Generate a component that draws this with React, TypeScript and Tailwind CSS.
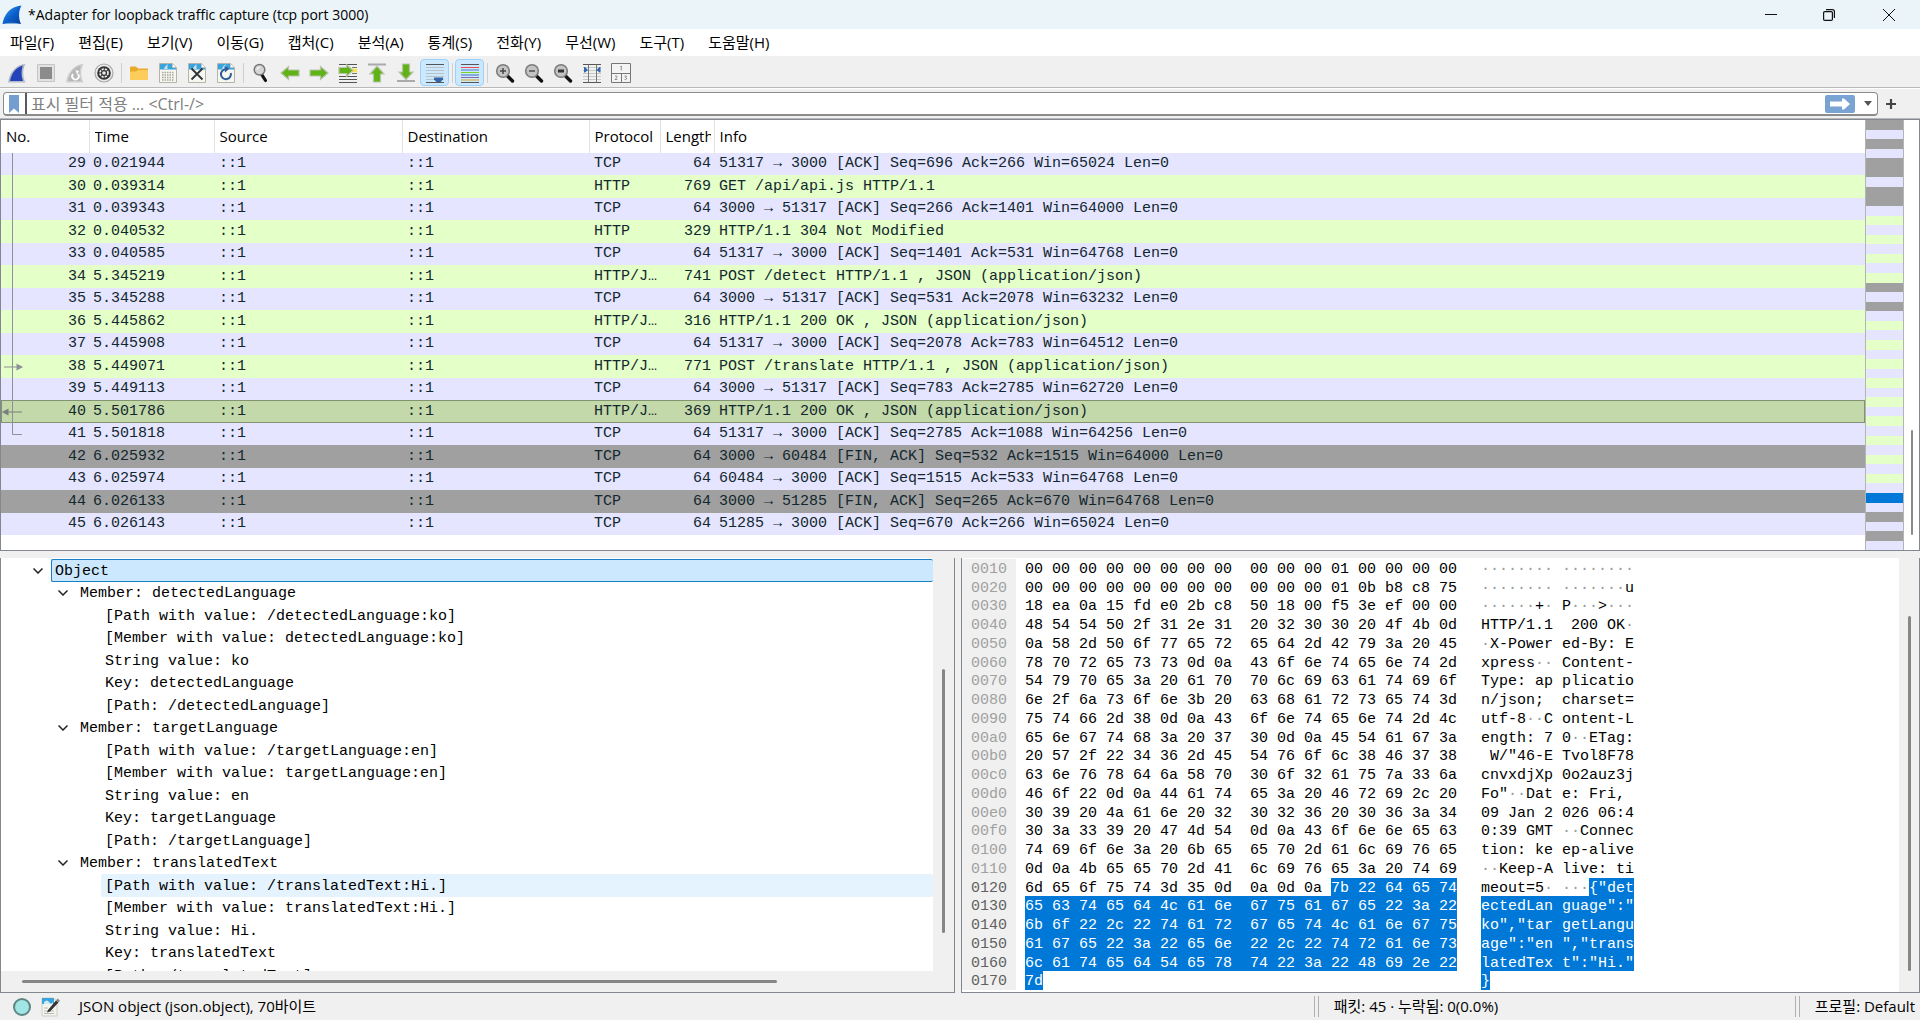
import type { ReactNode } from "react";

const menus = ["파일(F)", "편집(E)", "보기(V)", "이동(G)", "캡처(C)", "분석(A)", "통계(S)", "전화(Y)", "무선(W)", "도구(T)", "도움말(H)"];

type Kind = "tcp" | "http" | "fin" | "selected";

type Packet = {
  no: number;
  time: string;
  protocol: string;
  length: number;
  info: string;
  kind: Kind;
};

const packets: Packet[] = [
  { no: 29, time: "0.021944", protocol: "TCP", length: 64, info: "51317 → 3000 [ACK] Seq=696 Ack=266 Win=65024 Len=0", kind: "tcp" },
  { no: 30, time: "0.039314", protocol: "HTTP", length: 769, info: "GET /api/api.js HTTP/1.1", kind: "http" },
  { no: 31, time: "0.039343", protocol: "TCP", length: 64, info: "3000 → 51317 [ACK] Seq=266 Ack=1401 Win=64000 Len=0", kind: "tcp" },
  { no: 32, time: "0.040532", protocol: "HTTP", length: 329, info: "HTTP/1.1 304 Not Modified", kind: "http" },
  { no: 33, time: "0.040585", protocol: "TCP", length: 64, info: "51317 → 3000 [ACK] Seq=1401 Ack=531 Win=64768 Len=0", kind: "tcp" },
  { no: 34, time: "5.345219", protocol: "HTTP/J…", length: 741, info: "POST /detect HTTP/1.1 , JSON (application/json)", kind: "http" },
  { no: 35, time: "5.345288", protocol: "TCP", length: 64, info: "3000 → 51317 [ACK] Seq=531 Ack=2078 Win=63232 Len=0", kind: "tcp" },
  { no: 36, time: "5.445862", protocol: "HTTP/J…", length: 316, info: "HTTP/1.1 200 OK , JSON (application/json)", kind: "http" },
  { no: 37, time: "5.445908", protocol: "TCP", length: 64, info: "51317 → 3000 [ACK] Seq=2078 Ack=783 Win=64512 Len=0", kind: "tcp" },
  { no: 38, time: "5.449071", protocol: "HTTP/J…", length: 771, info: "POST /translate HTTP/1.1 , JSON (application/json)", kind: "http" },
  { no: 39, time: "5.449113", protocol: "TCP", length: 64, info: "3000 → 51317 [ACK] Seq=783 Ack=2785 Win=62720 Len=0", kind: "tcp" },
  { no: 40, time: "5.501786", protocol: "HTTP/J…", length: 369, info: "HTTP/1.1 200 OK , JSON (application/json)", kind: "selected" },
  { no: 41, time: "5.501818", protocol: "TCP", length: 64, info: "51317 → 3000 [ACK] Seq=2785 Ack=1088 Win=64256 Len=0", kind: "tcp" },
  { no: 42, time: "6.025932", protocol: "TCP", length: 64, info: "3000 → 60484 [FIN, ACK] Seq=532 Ack=1515 Win=64000 Len=0", kind: "fin" },
  { no: 43, time: "6.025974", protocol: "TCP", length: 64, info: "60484 → 3000 [ACK] Seq=1515 Ack=533 Win=64768 Len=0", kind: "tcp" },
  { no: 44, time: "6.026133", protocol: "TCP", length: 64, info: "3000 → 51285 [FIN, ACK] Seq=265 Ack=670 Win=64768 Len=0", kind: "fin" },
  { no: 45, time: "6.026143", protocol: "TCP", length: 64, info: "51285 → 3000 [ACK] Seq=670 Ack=266 Win=65024 Len=0", kind: "tcp" },
];

const rowColor: Record<Kind, string> = {
  tcp: "bg-[#e5e5ff]",
  http: "bg-[#e4ffc7]",
  fin: "bg-[#a0a0a0]",
  selected: "bg-[#c3d9a9] outline -outline-offset-1 outline-[#82946f]",
};

// one letter per packet: g = grey, t = tcp, h = http, s = selected
const minimap = "gtgtggtggt" + "hthththg" + "tg" + "th".repeat(9) + "tstgtgt";

const minimapColor: Record<string, string> = {
  g: "bg-[#a0a0a0]",
  t: "bg-[#e5e5ff]",
  h: "bg-[#e4ffc7]",
  s: "bg-[#0078d7]",
};

type Node = { level: 0 | 1 | 2; text: string; state?: "selected" | "hover" };

const tree: Node[] = [
  { level: 0, text: "Object", state: "selected" },
  { level: 1, text: "Member: detectedLanguage" },
  { level: 2, text: "[Path with value: /detectedLanguage:ko]" },
  { level: 2, text: "[Member with value: detectedLanguage:ko]" },
  { level: 2, text: "String value: ko" },
  { level: 2, text: "Key: detectedLanguage" },
  { level: 2, text: "[Path: /detectedLanguage]" },
  { level: 1, text: "Member: targetLanguage" },
  { level: 2, text: "[Path with value: /targetLanguage:en]" },
  { level: 2, text: "[Member with value: targetLanguage:en]" },
  { level: 2, text: "String value: en" },
  { level: 2, text: "Key: targetLanguage" },
  { level: 2, text: "[Path: /targetLanguage]" },
  { level: 1, text: "Member: translatedText" },
  { level: 2, text: "[Path with value: /translatedText:Hi.]", state: "hover" },
  { level: 2, text: "[Member with value: translatedText:Hi.]" },
  { level: 2, text: "String value: Hi." },
  { level: 2, text: "Key: translatedText" },
  { level: 2, text: "[Path: /translatedText]" },
];

const indent = ["pl-6", "pl-[49px]", "pl-[74px]"];

// hex and ascii are [plain, highlighted]
type HexRow = { offset: string; hex: [string, string]; ascii: [string, string] };

const hexRows: HexRow[] = [
  { offset: "0010", hex: ["00 00 00 00 00 00 00 00  00 00 00 01 00 00 00 00", ""], ascii: ["········ ········", ""] },
  { offset: "0020", hex: ["00 00 00 00 00 00 00 00  00 00 00 01 0b b8 c8 75", ""], ascii: ["········ ·······u", ""] },
  { offset: "0030", hex: ["18 ea 0a 15 fd e0 2b c8  50 18 00 f5 3e ef 00 00", ""], ascii: ["······+· P···>···", ""] },
  { offset: "0040", hex: ["48 54 54 50 2f 31 2e 31  20 32 30 30 20 4f 4b 0d", ""], ascii: ["HTTP/1.1  200 OK·", ""] },
  { offset: "0050", hex: ["0a 58 2d 50 6f 77 65 72  65 64 2d 42 79 3a 20 45", ""], ascii: ["·X-Power ed-By: E", ""] },
  { offset: "0060", hex: ["78 70 72 65 73 73 0d 0a  43 6f 6e 74 65 6e 74 2d", ""], ascii: ["xpress·· Content-", ""] },
  { offset: "0070", hex: ["54 79 70 65 3a 20 61 70  70 6c 69 63 61 74 69 6f", ""], ascii: ["Type: ap plicatio", ""] },
  { offset: "0080", hex: ["6e 2f 6a 73 6f 6e 3b 20  63 68 61 72 73 65 74 3d", ""], ascii: ["n/json;  charset=", ""] },
  { offset: "0090", hex: ["75 74 66 2d 38 0d 0a 43  6f 6e 74 65 6e 74 2d 4c", ""], ascii: ["utf-8··C ontent-L", ""] },
  { offset: "00a0", hex: ["65 6e 67 74 68 3a 20 37  30 0d 0a 45 54 61 67 3a", ""], ascii: ["ength: 7 0··ETag:", ""] },
  { offset: "00b0", hex: ["20 57 2f 22 34 36 2d 45  54 76 6f 6c 38 46 37 38", ""], ascii: [' W/"46-E Tvol8F78', ""] },
  { offset: "00c0", hex: ["63 6e 76 78 64 6a 58 70  30 6f 32 61 75 7a 33 6a", ""], ascii: ["cnvxdjXp 0o2auz3j", ""] },
  { offset: "00d0", hex: ["46 6f 22 0d 0a 44 61 74  65 3a 20 46 72 69 2c 20", ""], ascii: ['Fo"··Dat e: Fri, ', ""] },
  { offset: "00e0", hex: ["30 39 20 4a 61 6e 20 32  30 32 36 20 30 36 3a 34", ""], ascii: ["09 Jan 2 026 06:4", ""] },
  { offset: "00f0", hex: ["30 3a 33 39 20 47 4d 54  0d 0a 43 6f 6e 6e 65 63", ""], ascii: ["0:39 GMT ··Connec", ""] },
  { offset: "0100", hex: ["74 69 6f 6e 3a 20 6b 65  65 70 2d 61 6c 69 76 65", ""], ascii: ["tion: ke ep-alive", ""] },
  { offset: "0110", hex: ["0d 0a 4b 65 65 70 2d 41  6c 69 76 65 3a 20 74 69", ""], ascii: ["··Keep-A live: ti", ""] },
  { offset: "0120", hex: ["6d 65 6f 75 74 3d 35 0d  0a 0d 0a ", "7b 22 64 65 74"], ascii: ["meout=5· ···", '{"det'] },
  { offset: "0130", hex: ["", "65 63 74 65 64 4c 61 6e  67 75 61 67 65 22 3a 22"], ascii: ["", 'ectedLan guage":"'] },
  { offset: "0140", hex: ["", "6b 6f 22 2c 22 74 61 72  67 65 74 4c 61 6e 67 75"], ascii: ["", 'ko","tar getLangu'] },
  { offset: "0150", hex: ["", "61 67 65 22 3a 22 65 6e  22 2c 22 74 72 61 6e 73"], ascii: ["", 'age":"en ","trans'] },
  { offset: "0160", hex: ["", "6c 61 74 65 64 54 65 78  74 22 3a 22 48 69 2e 22"], ascii: ["", 'latedTex t":"Hi."'] },
  { offset: "0170", hex: ["", "7d"], ascii: ["", "}"] },
];

function Icon({ children }: { children: ReactNode }) {
  return (
    <svg viewBox="0 0 20 20" className="size-5" fill="none" aria-hidden="true">
      {children}
    </svg>
  );
}

function Fin({ fill, edge }: { fill: string; edge: string }) {
  return (
    <>
      <path d="M1 19.500C2.500 9.500 8 2 18.500.7c-2.800 5-3.200 12.300 0 18.800Z" fill={edge} />
      <path d="M3 18C4.500 10.500 8.500 4.500 15.800 2.500c-1.700 5-1.700 10.500.2 15.500Z" fill={fill} />
    </>
  );
}

function FilePage() {
  return (
    <>
      <path d="M1.500.5h13l4 4v15h-17Z" fill="#f7f7f0" stroke="#b4b4aa" />
      <path d="M2 1h12.500v3.500H18V6.500H2Z" fill="#3aa3dc" />
      <path d="M14.500.5v4h4Z" fill="#fff" stroke="#b4b4aa" strokeWidth=".6" />
      <path d="M7 3.500c1-.6 1.500-1.500 2.500-2.500v5H6Z" fill="#bfe3f5" />
    </>
  );
}

function Lens({ children }: { children?: ReactNode }) {
  return (
    <>
      <path d="m12 12.500 5.500 5.500" stroke="#111" strokeWidth="3.400" strokeLinecap="round" />
      <circle cx="8" cy="8" r="6.300" fill="#c4c4c4" stroke="#7c7c7c" strokeWidth="1.600" />
      {children}
    </>
  );
}

function Lines({ ys, color = "#555" }: { ys: number[]; color?: string }) {
  return (
    <>
      {ys.map((y) => (
        <path key={y} d={`M1 ${y}h18`} stroke={color} />
      ))}
    </>
  );
}

const green = { fill: "#5fb314", stroke: "#b9c4ad", strokeWidth: 1.2 };

type Tool = { label: string; icon: ReactNode; pressed?: boolean } | "sep";

const tools: Tool[] = [
  { label: "시작", icon: <Fin fill="#2344b8" edge="#b5b9c6" /> },
  {
    label: "중지",
    icon: (
      <>
        <path d="M1.500 1.500h17v17h-17Z" fill="#e2e2e2" stroke="#c4c4c4" />
        <path d="M4 4h12v12H4Z" fill="#8b8b8b" />
      </>
    ),
  },
  {
    label: "다시 시작",
    icon: (
      <>
        <Fin fill="#b8b8b8" edge="#cfcfcf" />
        <path d="M8 11a3.300 3.300 0 1 0 5 0" stroke="#fff" strokeWidth="1.800" />
        <path d="m10.500 7 3.500 1-2 3.500Z" fill="#fff" />
      </>
    ),
  },
  {
    label: "옵션",
    icon: (
      <>
        <circle cx="10" cy="10" r="9" fill="#e9e9e9" stroke="#a9a9a9" strokeWidth="1.200" />
        <circle cx="10" cy="10" r="6.800" fill="#333" />
        <circle cx="10" cy="10" r="4" stroke="#eee" strokeWidth="1.700" strokeDasharray="2.200 1" />
        <circle cx="10" cy="10" r="1.800" fill="#eee" />
      </>
    ),
  },
  "sep",
  {
    label: "열기",
    icon: (
      <>
        <path d="M1 4.500q0-1 1-1h5l2 2h9q1 0 1 1V9H1Z" fill="#e8a92c" />
        <path d="M1 16V8.500h6l2-1.500h9.500q.5 0 .5.5V16q0 1-1 1H2q-1 0-1-1Z" fill="#fccd5a" />
      </>
    ),
  },
  {
    label: "저장",
    icon: (
      <>
        <FilePage />
        <path d="M4 9.500h12M4 12h12M4 14.500h12M4 17h12" stroke="#a5a59d" strokeWidth="1.500" strokeDasharray="1.500 1" />
      </>
    ),
  },
  {
    label: "닫기",
    icon: (
      <>
        <FilePage />
        <path d="m4.500 5.500 11 11m0-11-11 11" stroke="#2c3338" strokeWidth="1.800" />
      </>
    ),
  },
  {
    label: "새로 고침",
    icon: (
      <>
        <FilePage />
        <path d="M14.800 10A5 5 0 1 1 9.500 6.200" stroke="#2f5c99" strokeWidth="2" />
        <path d="m8.500 3 5 2.500-4.500 4Z" fill="#2f5c99" />
      </>
    ),
  },
  "sep",
  {
    label: "찾기",
    icon: (
      <>
        <path d="m11 12 3.500 5.500" stroke="#111" strokeWidth="3.200" strokeLinecap="round" />
        <circle cx="8.500" cy="6.800" r="5.300" fill="#d5d5d5" stroke="#777" strokeWidth="1.500" />
        <path d="M6 6.500q1-2.500 3-2.500" stroke="#fff" strokeWidth="1.200" />
      </>
    ),
  },
  { label: "이전 패킷", icon: <path d="M1 10 8.500 3.500V7H19v6H8.500v3.500Z" {...green} /> },
  { label: "다음 패킷", icon: <path d="M19 10 11.500 3.500V7H1v6h10.500v3.500Z" {...green} /> },
  {
    label: "패킷으로 이동",
    icon: (
      <>
        <Lines ys={[1.5, 13.5, 16.5, 19.5]} />
        <path d="M14 4.500h5M14 10.500h5" stroke="#777" />
        <path d="M14 7.500h5" stroke="#ffe34d" strokeWidth="3.500" />
        <path d="M15 7.500 8.500 1.500v3H1v6h7.500v3Z" {...green} />
      </>
    ),
  },
  {
    label: "첫 번째 패킷",
    icon: (
      <>
        <path d="M1 1.500h18" stroke="#aaa" strokeWidth="2" />
        <path d="m10 3 7 8h-3.500v8h-7v-8H3Z" {...green} />
      </>
    ),
  },
  {
    label: "마지막 패킷",
    icon: (
      <>
        <path d="M1 18h18" stroke="#aaa" strokeWidth="2" />
        <path d="m10 16.500 7-7.500h-3.500V1h-7v8H3Z" {...green} />
      </>
    ),
  },
  {
    label: "자동 스크롤",
    pressed: true,
    icon: (
      <>
        <Lines ys={[1.5, 19.5]} />
        <Lines ys={[4.5, 7.5, 10.5, 13.5, 16.5]} color="#b9c3c7" />
        <path d="M9 14.500h9v2L15.500 19h-4L9 16.500Z" fill="#3465a4" />
      </>
    ),
  },
  "sep",
  {
    label: "색상화",
    pressed: true,
    icon: (
      <>
        <Lines ys={[1.5, 19.5]} />
        <Lines ys={[4.5]} color="#ef4b4b" />
        <Lines ys={[7]} color="#4a7fc4" />
        <Lines ys={[9.5]} color="#7ed321" />
        <Lines ys={[12]} color="#3f6fb5" />
        <Lines ys={[14.5]} color="#8a6aa8" />
        <Lines ys={[17]} color="#d9a520" />
      </>
    ),
  },
  "sep",
  { label: "확대", icon: <Lens><path d="M5 8h6M8 5v6" stroke="#444" strokeWidth="1.400" /></Lens> },
  { label: "축소", icon: <Lens><path d="M5 8h6" stroke="#444" strokeWidth="1.400" /></Lens> },
  { label: "원래 크기", icon: <Lens><path d="M5 8h6" stroke="#333" strokeWidth="3" /></Lens> },
  {
    label: "열 크기 조정",
    icon: (
      <>
        <Lines ys={[4.5, 7.5, 10.5, 13.5, 16.5]} color="#c6cac3" />
        <Lines ys={[1.5, 19.5]} />
        <path d="M6.500 1.500v18M14.500 1.500v18" stroke="#777" />
        <path d="M2 4v5.500h1L6 7 3 4ZM18.500 4v5.500h-1l-3-2.500 3-3Z" fill="#2f66b0" />
      </>
    ),
  },
  {
    label: "레이아웃",
    icon: (
      <>
        <path d="M.5.5h19v19H.5ZM.5 10.500h19M10.500 10.500v9" fill="#f4f4f4" stroke="#777" />
        <path d="M9.300 4 10.300 3v4.500M4 13.200q2-1 2 .5 0 1-2 2.800h2.300M13.500 13h2l-1 1.500q1.500.3 1 1.500-.8 1-2 .4" stroke="#777" strokeWidth=".8" />
      </>
    ),
  },
];

function TitleBar() {
  return (
    <header className="flex h-[29px] items-center bg-[#ebf4f8] pl-[2px] text-[14px]">
      <svg viewBox="0 0 20 20" className="size-5" aria-hidden="true">
        <defs>
          <linearGradient id="fin" x1="0" y1="0" x2="1" y2="1">
            <stop offset="0" stopColor="#4aa3ee" />
            <stop offset="0.5" stopColor="#0b62cf" />
            <stop offset="1" stopColor="#083c9c" />
          </linearGradient>
        </defs>
        <path d="M.5 19C2 9.500 8 1.500 19.500.5c-3 5-3.300 12.500-.5 18.500Z" fill="url(#fin)" />
        <path d="M.5 19q9-2.500 18.500 0Z" fill="#7fb0e0" />
      </svg>
      <h1 className="ml-[6px] flex-1">*Adapter for loopback traffic capture (tcp port 3000)</h1>
      <button aria-label="최소화" className="grid h-full w-[58px] place-items-center">
        <svg viewBox="0 0 12 12" className="size-3" stroke="#111" aria-hidden="true"><path d="M0 5.500h12" /></svg>
      </button>
      <button aria-label="이전 크기로 복원" className="grid h-full w-[58px] place-items-center">
        <svg viewBox="0 0 12 12" className="size-3" fill="none" stroke="#111" strokeWidth="1.200" aria-hidden="true">
          <rect x=".6" y="2.600" width="8.800" height="8.800" rx="1.200" />
          <path d="M3 .6h6.400q2 0 2 2V9" />
        </svg>
      </button>
      <button aria-label="닫기" className="grid h-full w-[62px] place-items-center">
        <svg viewBox="0 0 12 12" className="size-3" stroke="#111" aria-hidden="true"><path d="m0 0 12 12M12 0 0 12" /></svg>
      </button>
    </header>
  );
}

function FilterBar() {
  return (
    <div className="flex h-[30px] items-center gap-2 border-t border-white pl-[3px] pr-6 pt-px">
      <div className="flex h-6 flex-1 items-center rounded-sm border border-b-2 border-[#8c8c8c] bg-white pl-1">
        <button aria-label="책갈피">
          <svg viewBox="0 0 12 18" className="h-[18px] w-3" aria-hidden="true">
            <path d="M1 0h10v18l-5-4.500L1 18Z" fill="#729fcf" />
          </svg>
        </button>
        <span className="ml-[5px] h-full w-[2px] bg-[#5a5a5a]" />
        <input
          aria-label="표시 필터"
          placeholder="표시 필터 적용 … <Ctrl-/>"
          className="h-full min-w-0 flex-1 px-1 text-[16px] outline-none placeholder:text-[#808080]"
        />
        <button aria-label="적용" className="grid h-[18px] w-[30px] place-items-center rounded-xs bg-[#78a3d3]">
          <svg viewBox="0 0 20 12" className="h-3 w-5" aria-hidden="true">
            <path d="M0 3.500h12V.5h2L20 6l-6 5.500h-2v-3H0Z" fill="#fff" />
          </svg>
        </button>
        <button aria-label="최근 필터" className="ml-1 grid h-full w-[18px] place-items-center">
          <svg viewBox="0 0 8 5" className="h-[5px] w-2" aria-hidden="true"><path d="M0 0h8L4 5Z" fill="#555" /></svg>
        </button>
      </div>
      <button aria-label="필터 단추 추가">
        <svg viewBox="0 0 10 10" className="size-[10px]" aria-hidden="true"><path d="M5 0v10M0 5h10" stroke="#444" strokeWidth="2.200" /></svg>
      </button>
    </div>
  );
}

// conversation marker at the left edge of each row
function Marker({ no }: { no: number }) {
  if (no > 41) return null;
  return (
    <svg viewBox="0 0 24 22" className="absolute left-0 top-0 h-full w-6" preserveAspectRatio="none" fill="none" stroke="#90909a" aria-hidden="true">
      {no === 41 ? <path d="M11.500 0v11.500H21" /> : <path d="M11.500 0v22" />}
      {no === 38 && <path d="M3 11.500h13M16 9l5 2.500-5 2.500Z" fill="#90909a" />}
      {no === 40 && <path d="M21 11.500H7M7 9l-5 2.500L7 14Z" fill="#7d7d7d" stroke="#7d7d7d" />}
    </svg>
  );
}

function PacketList() {
  return (
    <section className="flex min-h-0 flex-[431] border border-[#828790] bg-white">
      <div className="min-w-0 flex-1 overflow-hidden">
        <table className="w-full table-fixed border-collapse">
          <colgroup>
            <col className="w-[88px]" />
            <col className="w-[125px]" />
            <col className="w-[188px]" />
            <col className="w-[187px]" />
            <col className="w-[71px]" />
            <col className="w-[54px]" />
            <col />
          </colgroup>
          <thead>
            <tr className="h-[33px] text-left text-[15px]">
              {["No.", "Time", "Source", "Destination", "Protocol", "Length", "Info"].map((name) => (
                <th key={name} className="border-r border-[#e2e2e2] py-0 pl-[5px] pr-[3px] font-normal last:border-0">
                  <div className="overflow-hidden whitespace-nowrap">{name}</div>
                </th>
              ))}
            </tr>
          </thead>
          <tbody className="font-['Liberation_Mono','Noto_Sans_CJK_KR',monospace] text-[15px] leading-5 text-[#12272e]">
            {packets.map((p) => (
              <tr key={p.no} className={`${p.no % 2 ? "h-[22px]" : "h-[23px]"} ${rowColor[p.kind]}`}>
                <td className="relative p-0 pr-[3px] text-right">
                  <Marker no={p.no} />
                  {p.no}
                </td>
                <td className="p-0 pl-1">{p.time}</td>
                <td className="p-0 pl-[5px]">::1</td>
                <td className="p-0 pl-[5px]">::1</td>
                <td className="whitespace-nowrap p-0 pl-[5px]">{p.protocol}</td>
                <td className="p-0 pr-[3px] text-right">{p.length}</td>
                <td className="truncate p-0 pl-[5px]">{p.info}</td>
              </tr>
            ))}
          </tbody>
        </table>
      </div>
      <div className="flex w-[39px] flex-col border-x border-[#b4b4b4]">
        {minimap.split("").map((c, i) => (
          <span key={i} className={`flex-1 ${minimapColor[c]}`} />
        ))}
      </div>
      <div className="flex w-[15px] flex-col items-center pb-[15px]">
        <span className="mt-auto h-[105px] w-[2px] rounded-full bg-[#8a8a8a]" />
      </div>
    </section>
  );
}

function DetailTree() {
  return (
    <section className="flex min-w-0 flex-[955] flex-col border border-t-0 border-[#828790]">
      <div className="flex min-h-0 flex-1">
        <ul className="min-w-0 flex-1 overflow-hidden bg-white pt-px font-['Liberation_Mono','Noto_Sans_CJK_KR',monospace] text-[15px] leading-5">
          {tree.map((node, i) => (
            <li key={node.text} className={`flex ${i % 2 ? "h-[22px]" : "h-[23px]"} ${indent[node.level]}`}>
              {node.level < 2 ? (
                <button aria-label="접기" className="grid w-[26px] place-items-center">
                  <svg viewBox="0 0 10 6" className="h-[6px] w-[10px]" fill="none" stroke="#222" strokeWidth="1.500" aria-hidden="true">
                    <path d="m.5.5 4.500 4.500L9.500.5" />
                  </svg>
                </button>
              ) : (
                <span className="w-[26px]" />
              )}
              <span
                className={`flex flex-1 items-center whitespace-pre rounded-xs border px-[3px] pt-[2px] ${
                  node.state === "selected"
                    ? "border-r-0 border-[#1a7fc9] bg-[#cce8ff]"
                    : node.state === "hover"
                      ? "border-transparent bg-[#e5f3ff]"
                      : "border-transparent"
                }`}
              >
                {node.text}
              </span>
            </li>
          ))}
        </ul>
        <div className="flex w-[21px] justify-center bg-[#f0f0f0] pb-[38px]">
          <span className="mt-auto h-[264px] w-[3px] rounded-full bg-[#868686]" />
        </div>
      </div>
      <div className="flex h-[21px] items-center pl-[21px]">
        <span className="h-[3px] w-[81%] rounded-full bg-[#868686]" />
      </div>
    </section>
  );
}

function Ascii({ text }: { text: string }) {
  return (
    <>
      {text.split(/(·+)/).map((part, i) => (
        <span key={i} className={part.startsWith("·") ? "text-[#9a9a9a]" : ""}>
          {part}
        </span>
      ))}
    </>
  );
}

function HexView() {
  const mark = "inline-block h-full bg-[#0078d7] text-white";
  return (
    <section className="flex min-w-0 flex-[959] border border-t-0 border-[#828790] bg-white">
      <div className="min-w-0 flex-1 overflow-hidden pt-px font-['Liberation_Mono','Noto_Sans_CJK_KR',monospace] text-[15px] leading-[21px]">
        {hexRows.map((row, i) => (
          <div key={row.offset} className={`flex whitespace-pre ${i % 4 === 1 ? "h-[18px]" : "h-[19px]"}`}>
            <span className={`w-[54px] bg-[#f0f0f0] pl-[9px] ${row.hex[1] ? "text-[#606060]" : "text-[#a0a0a0]"}`}>{row.offset}</span>
            <span className="ml-[9px] w-[456px]">
              {row.hex[0]}
              {row.hex[1] && <span className={mark}>{row.hex[1]}</span>}
            </span>
            <span>
              <Ascii text={row.ascii[0]} />
              {row.ascii[1] && <span className={mark}>{row.ascii[1]}</span>}
            </span>
          </div>
        ))}
      </div>
      <div className="flex w-5 justify-center bg-[#f0f0f0] pb-[21px]">
        <span className="mt-auto h-[355px] w-[3px] rounded-full bg-[#868686]" />
      </div>
    </section>
  );
}

function StatusBar() {
  return (
    <footer className="flex h-[27px] items-center text-[15px]">
      <button aria-label="전문가 정보" className="ml-[13px] size-[18px] rounded-full border-2 border-[#5e8583] bg-[#9fe6e4]" />
      <button aria-label="캡처 파일 설명" className="ml-[10px]">
        <Icon>
          <path d="M1 1h11l4 3v15H1Z" fill="#f4f4ee" stroke="#c4c4bc" strokeWidth=".8" />
          <path d="M1 1h12v6H1Z" fill="#3aa3dc" />
          <path d="M3 5q3-3 5 0t4 0v2H3Z" fill="#cfeaf7" />
          <path d="M3 11h4M3 14h10M3 16.500h10" stroke="#bbb" />
          <path d="m7 13 8-9.500 2.500 2-8.500 9-3 1Z" fill="#333" />
          <path d="m15 3.500 1.500-2 2.500 2-1.500 2Z" fill="#8a8a8a" />
        </Icon>
      </button>
      <span className="ml-[18px] flex-1 whitespace-nowrap">JSON object (json.object), 70바이트</span>
      <span className="mr-[15px] h-[21px] w-[5px] border-x border-[#b0b0b0]" />
      <span className="w-[461px] whitespace-nowrap">패킷: 45 · 누락됨: 0(0.0%)</span>
      <span className="mr-[15px] h-[21px] w-[5px] border-x border-[#b0b0b0]" />
      <button className="mr-[5px] whitespace-nowrap">프로필: Default</button>
    </footer>
  );
}

export default function App() {
  return (
    <div className="flex h-screen flex-col overflow-hidden bg-[#f0f0f0] font-['Open_Sans','Noto_Sans_CJK_KR',sans-serif] text-black">
      <TitleBar />
      <nav className="flex h-[27px] items-center gap-1 bg-white text-[15px]">
        {menus.map((name) => (
          <button key={name} className="whitespace-nowrap px-[10px]">
            {name}
          </button>
        ))}
      </nav>
      <div className="flex h-8 items-center border-b border-[#b9b9b9] pl-[2px] pt-[2px]" role="toolbar">
        {tools.map((tool, i) =>
          tool === "sep" ? (
            <span key={i} className="flex w-[6px] justify-center">
              <span className="h-5 w-px bg-[#cfcfcf]" />
            </span>
          ) : (
            <button
              key={i}
              aria-label={tool.label}
              className={`grid h-[27px] w-[29px] place-items-center rounded-sm border ${
                tool.pressed ? "border-[#99d1ff] bg-[#cce8ff]" : "border-transparent"
              }`}
            >
              <Icon>{tool.icon}</Icon>
            </button>
          )
        )}
      </div>
      <FilterBar />
      <div className="h-px bg-[#b9b9b9]" />
      <main className="flex min-h-0 flex-1 flex-col">
        <PacketList />
        <div className="h-[7px] flex-none" />
        <div className="flex min-h-0 flex-[436] gap-[6px]">
          <DetailTree />
          <HexView />
        </div>
      </main>
      <StatusBar />
    </div>
  );
}
